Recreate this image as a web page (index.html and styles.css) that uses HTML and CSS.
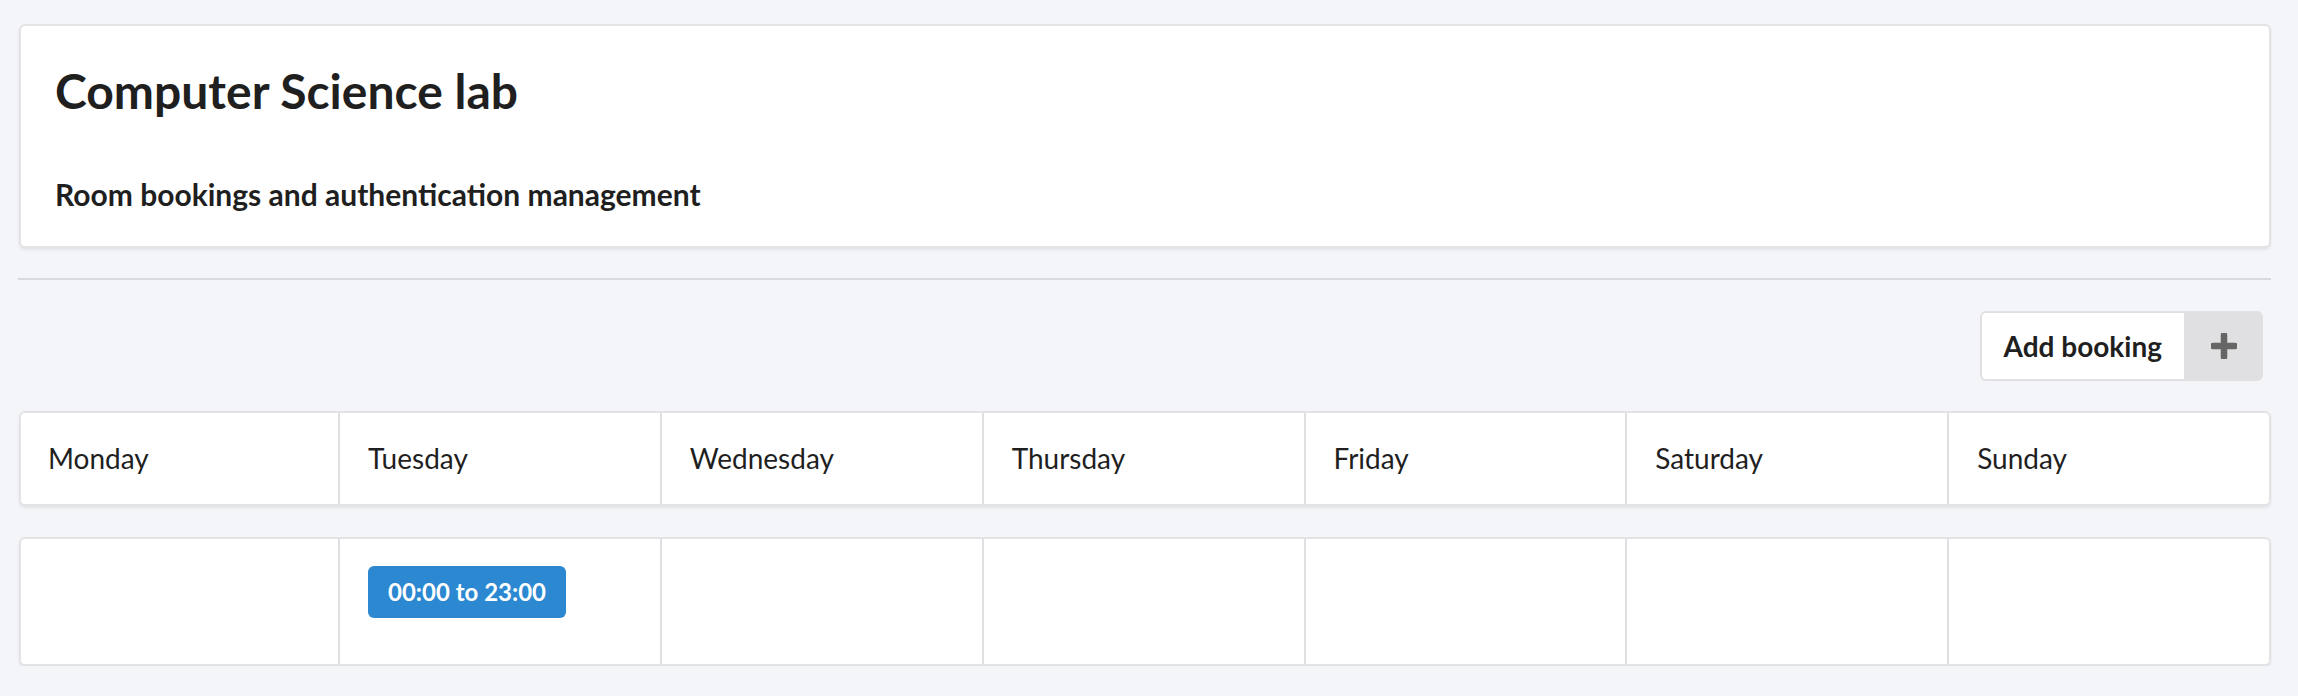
FILE: index.html
```html
<!DOCTYPE html>
<html lang="en">
<head>
<meta charset="utf-8">
<title>Computer Science lab</title>
<link rel="stylesheet" href="styles.css">
</head>
<body>
<main class="page">
  <section class="card header-card">
    <h1 class="title">Computer Science lab</h1>
    <p class="subtitle">Room bookings and authentication management</p>
  </section>
  <hr class="divider">
  <div class="toolbar">
    <button class="add-btn" type="button">
      <span class="add-label">Add booking</span>
      <span class="add-icon">
        <svg width="26" height="26" viewBox="0 0 26 26" aria-hidden="true">
          <path d="M13 2 V24 M2 13 H24" stroke="#666" stroke-width="6.5" stroke-linecap="round"/>
        </svg>
      </span>
    </button>
  </div>
  <div class="card week week-head">
    <div class="cell">Monday</div>
    <div class="cell">Tuesday</div>
    <div class="cell">Wednesday</div>
    <div class="cell">Thursday</div>
    <div class="cell">Friday</div>
    <div class="cell">Saturday</div>
    <div class="cell">Sunday</div>
  </div>
  <div class="card week week-body">
    <div class="cell"></div>
    <div class="cell"><span class="chip">00:00 to 23:00</span></div>
    <div class="cell"></div>
    <div class="cell"></div>
    <div class="cell"></div>
    <div class="cell"></div>
    <div class="cell"></div>
  </div>
</main>
</body>
</html>
```

FILE: styles.css
```css
* { box-sizing: border-box; }
html, body { margin: 0; padding: 0; }
body {
  background: #f4f5f8;
  font-family: Lato, "Noto Sans", sans-serif;
  color: #1f1f1f;
}
.page {
  padding: 24px 27px 0 19px;
}
.card {
  background: #fff;
  border: 2px solid #e3e3e6;
  border-radius: 6px;
  box-shadow: 0 2px 3px rgba(0, 0, 0, 0.07);
}
.header-card {
  padding: 36px 34px 34px;
}
.title {
  margin: 0;
  font-size: 48px;
  line-height: 1.2;
  font-weight: 700;
}
.subtitle {
  margin: 56px 0 0;
  font-size: 30px;
  line-height: 1.2;
  font-weight: 700;
}
.divider {
  margin: 30px 0 0 -1px;
  border: 0;
  height: 2px;
  background: #d9d9dd;
}
.toolbar {
  display: flex;
  justify-content: flex-end;
  padding: 31px 8px 0 0;
}
.add-btn {
  display: flex;
  align-items: stretch;
  height: 70px;
  padding: 0;
  border: 0;
  background: transparent;
  font-family: inherit;
  cursor: pointer;
}
.add-label {
  display: flex;
  align-items: center;
  padding: 0 22px 0 22px;
  background: #fff;
  border: 2px solid #e0e0e3;
  border-right: 0;
  border-radius: 6px 0 0 6px;
  font-size: 28px;
  font-weight: 700;
  color: #1f1f1f;
}
.add-icon {
  display: flex;
  align-items: center;
  justify-content: center;
  width: 79px;
  background: #e0e0e2;
  border-radius: 0 6px 6px 0;
}
.week {
  display: grid;
  grid-template-columns: 317px repeat(6, 1fr);
}
.week-head {
  margin-top: 30px;
}
.week-body {
  margin-top: 31px;
}
.cell {
  border-left: 2px solid #e0e0e3;
  padding: 0 28px;
}
.cell:first-child { border-left: 0; padding-left: 27px; }
.week-head .cell {
  display: flex;
  align-items: center;
  height: 91px;
  font-size: 28px;
}
.week-body .cell {
  height: 125px;
  padding-top: 27px;
}
.chip {
  display: inline-block;
  background: #2b88d1;
  color: #fff;
  font-weight: 700;
  font-size: 24px;
  line-height: 28px;
  padding: 12px 20px;
  border-radius: 6px;
}
```
